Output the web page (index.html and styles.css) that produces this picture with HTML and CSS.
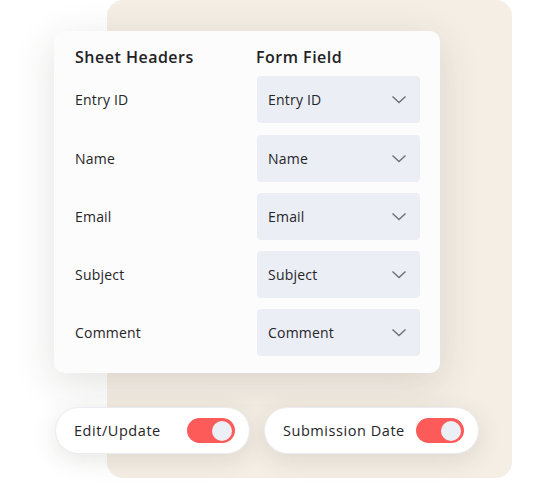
FILE: index.html
```html
<!DOCTYPE html>
<html lang="en">
<head>
    <meta charset="UTF-8">
    <meta name="viewport" content="width=device-width, initial-scale=1.0">
    <title>Field Mapping</title>
    <link rel="stylesheet" href="styles.css">
</head>
<body>
    <div class="stage">
        <div class="backdrop"></div>
        <div class="content">
            <div class="card">
                <div class="head">
                    <span>Sheet Headers</span>
                    <span>Form Field</span>
                </div>
                <div class="row">
                    <span class="label">Entry ID</span>
                    <div class="select">Entry ID <svg width="16" height="9" viewBox="0 0 16 9"><path d="M1.5 1.5 L8 7.5 L14.5 1.5" fill="none" stroke="#6d707a" stroke-width="1.4"/></svg></div>
                </div>
                <div class="row">
                    <span class="label">Name</span>
                    <div class="select">Name <svg width="16" height="9" viewBox="0 0 16 9"><path d="M1.5 1.5 L8 7.5 L14.5 1.5" fill="none" stroke="#6d707a" stroke-width="1.4"/></svg></div>
                </div>
                <div class="row">
                    <span class="label">Email</span>
                    <div class="select">Email <svg width="16" height="9" viewBox="0 0 16 9"><path d="M1.5 1.5 L8 7.5 L14.5 1.5" fill="none" stroke="#6d707a" stroke-width="1.4"/></svg></div>
                </div>
                <div class="row">
                    <span class="label">Subject</span>
                    <div class="select">Subject <svg width="16" height="9" viewBox="0 0 16 9"><path d="M1.5 1.5 L8 7.5 L14.5 1.5" fill="none" stroke="#6d707a" stroke-width="1.4"/></svg></div>
                </div>
                <div class="row">
                    <span class="label">Comment</span>
                    <div class="select">Comment <svg width="16" height="9" viewBox="0 0 16 9"><path d="M1.5 1.5 L8 7.5 L14.5 1.5" fill="none" stroke="#6d707a" stroke-width="1.4"/></svg></div>
                </div>
            </div>

            <div class="options">
                <div class="pill pill-edit">
                    <span>Edit/Update</span>
                    <span class="switch"><span class="knob"></span></span>
                </div>
                <div class="pill pill-date">
                    <span>Submission Date</span>
                    <span class="switch"><span class="knob"></span></span>
                </div>
            </div>
        </div>
    </div>
</body>
</html>
```

FILE: styles.css
```css
body {
    margin: 0;
    background: #ffffff;
    font-family: 'Open Sans', 'Noto Sans', sans-serif;
    color: #252528;
}
.stage {
    display: grid;
    width: 540px;
    height: 485px;
}
.backdrop {
    grid-area: 1 / 1;
    margin-left: 107px;
    width: 405px;
    height: 478px;
    background: #f5eee5;
    border-radius: 16px;
}
.content {
    grid-area: 1 / 1;
    padding: 31px 0 0 54px;
}
.card {
    width: 386px;
    height: 342px;
    box-sizing: border-box;
    padding: 14px 20px 0 21px;
    background: #fcfcfc;
    border-radius: 10px;
    box-shadow: 0 10px 40px rgba(60, 50, 40, 0.14);
}
.head {
    display: grid;
    grid-template-columns: 181px 163px;
    height: 24px;
    line-height: 24px;
    font-size: 16px;
    font-weight: 600;
    letter-spacing: 0.5px;
    color: #222225;
    margin-bottom: 7px;
}
.row {
    display: grid;
    grid-template-columns: 182px 163px;
    align-items: center;
    margin-bottom: 11px;
}
.head + .row { margin-bottom: 12px; }
.label {
    font-size: 14px;
    font-weight: 500;
    letter-spacing: 0.2px;
}
.select {
    height: 47px;
    box-sizing: border-box;
    padding: 0 13px 0 11px;
    display: flex;
    align-items: center;
    justify-content: space-between;
    background: #eceef6;
    border-radius: 4px;
    font-size: 14px;
    font-weight: 500;
    letter-spacing: 0.2px;
}
.options {
    display: flex;
    gap: 14px;
    margin-top: 34px;
    padding-left: 1px;
}
.pill {
    height: 47px;
    box-sizing: border-box;
    display: flex;
    align-items: center;
    justify-content: space-between;
    padding: 0 14px 0 18px;
    background: #ffffff;
    border: 1px solid #ececf0;
    border-radius: 24px;
    box-shadow: 0 6px 24px rgba(60, 50, 40, 0.12);
    font-size: 14.5px;
    font-weight: 500;
    letter-spacing: 0.55px;
}
.pill-edit { width: 195px; }
.pill-date { width: 215px; }
.switch {
    width: 48px;
    height: 25px;
    border-radius: 13px;
    background: #fd5a5a;
    display: flex;
    align-items: center;
    justify-content: flex-end;
    padding-right: 3px;
    box-sizing: border-box;
}
.knob {
    width: 20px;
    height: 20px;
    border-radius: 50%;
    background: #eceff5;
}
```
